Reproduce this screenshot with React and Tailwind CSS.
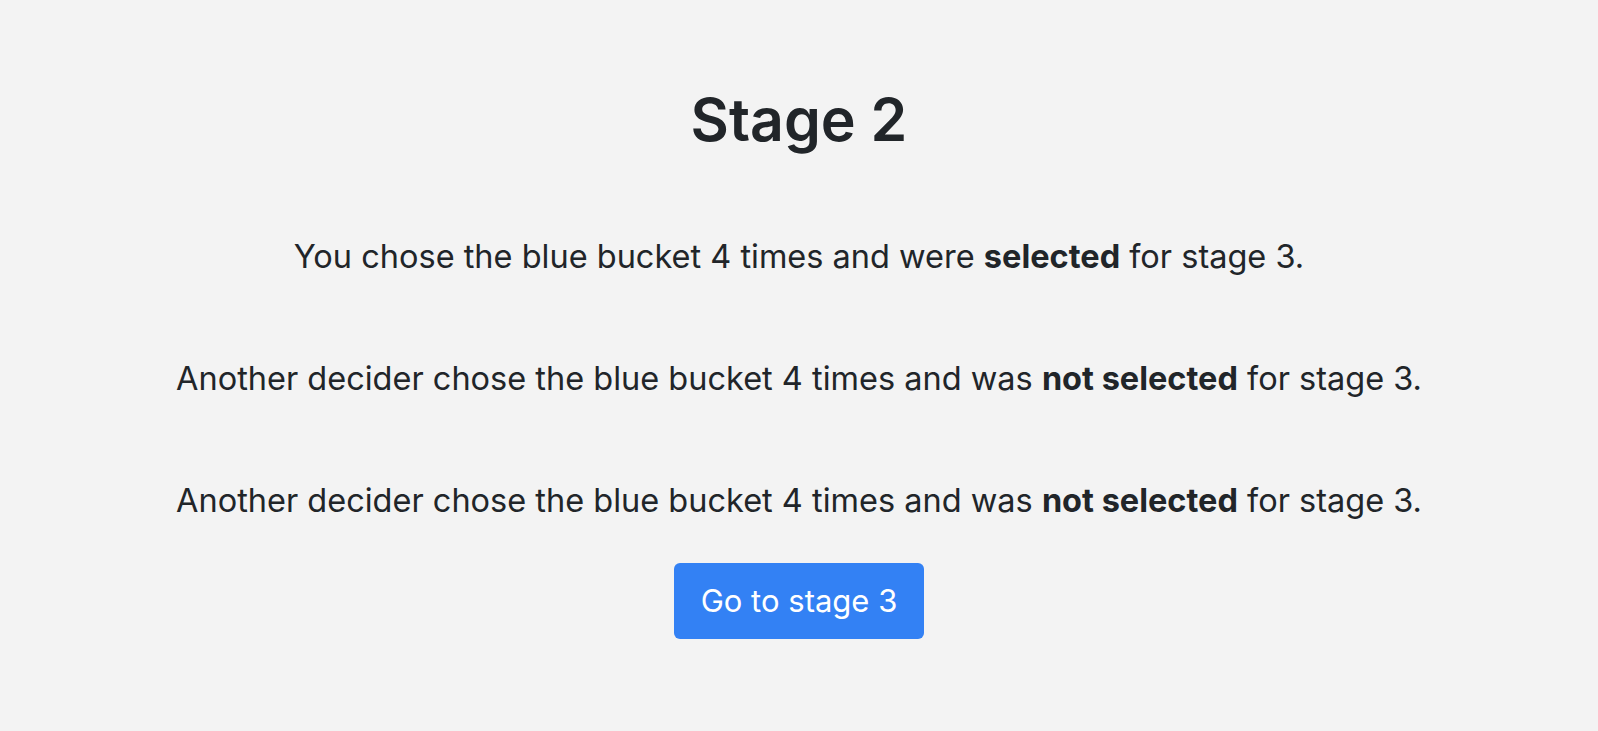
import React from 'react';

const Result = ({ who, verb, outcome }) => (
  <p className="text-[32.5px] leading-[48px] text-[#212529]">
    {who} chose the blue bucket 4 times and {verb} <b className="font-bold">{outcome}</b> for stage 3.
  </p>
);

const App = () => {
  return (
    <div
      className="min-h-[731px] bg-[#f3f3f3] flex flex-col items-center text-center pt-[83px]"
      style={{ fontFamily: 'Inter, "Liberation Sans", sans-serif' }}
    >
      <h1 className="text-[59px] leading-[74px] font-semibold text-[#212529]">Stage 2</h1>
      <div className="mt-[76px] flex flex-col gap-[74px]">
        <Result who="You" verb="were" outcome="selected" />
        <Result who="Another decider" verb="was" outcome="not selected" />
        <Result who="Another decider" verb="was" outcome="not selected" />
      </div>
      <button className="mt-[38px] h-[76px] px-[27px] rounded-md bg-[#3381f4] text-white text-[31px]">
        Go to stage 3
      </button>
    </div>
  );
};

export default App;
